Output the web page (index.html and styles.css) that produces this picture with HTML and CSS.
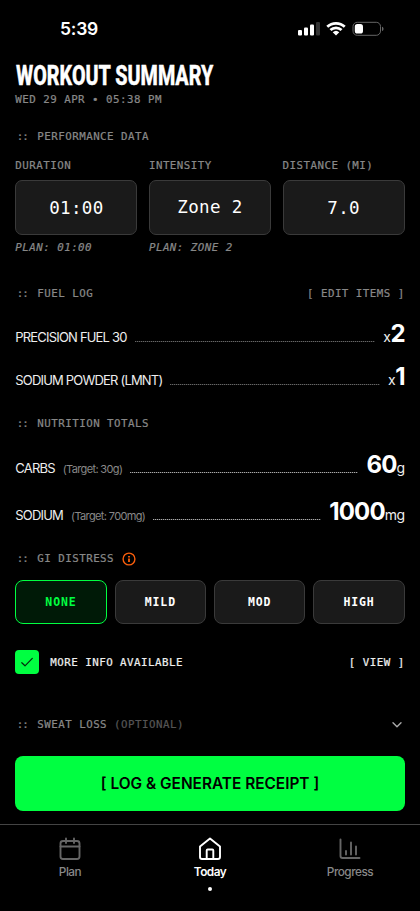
FILE: index.html
```html
<!DOCTYPE html>
<html lang="en">
<head>
<meta charset="utf-8">
<title>Workout Summary</title>
<link rel="stylesheet" href="styles.css">
</head>
<body>
<div class="status">
  <span class="time">5:39</span>
  <svg class="status-icons" width="86" height="16" viewBox="0 0 86 16" fill="#fff">
    <rect x="0" y="9" width="4" height="5.5" rx="1.1"/><rect x="6" y="6.5" width="4" height="8" rx="1.1"/><rect x="12" y="3.5" width="4" height="11" rx="1.1"/><rect x="18" y="1" width="4" height="13.500" rx="1.100" fill="#333"/>
    <path d="M28.300 4.800a14 14 0 0 1 19.400 0l-1.900 2a11.300 11.300 0 0 0-15.600 0zM31.500 8.100a9.400 9.400 0 0 1 13 0l-1.900 2a6.600 6.600 0 0 0-9.200 0zM34.700 11.300a4.800 4.800 0 0 1 6.600 0L38 14.600z"/>
    <rect x="55" y="1.300" width="27.500" height="13" rx="4.200" fill="none" stroke="#666"/>
    <path d="M84 5.700c2 .5 2 3.700 0 4.200z" fill="#666"/>
    <rect x="56.800" y="3.100" width="8.200" height="9.500" rx="2.600"/>
  </svg>
</div>
<main>
  <h1><span>WORKOUT SUMMARY</span></h1>
  <p class="date mono">WED 29 APR • 05:38 PM</p>

  <h2 class="section mono performance"><i class="mark">::</i>PERFORMANCE DATA</h2>
  <div class="metrics">
    <div class="metric mono"><label>DURATION</label><div class="value">01:00</div><em>PLAN: 01:00</em></div>
    <div class="metric mono"><label>INTENSITY</label><div class="value zone">Zone 2</div><em>PLAN: ZONE 2</em></div>
    <div class="metric mono"><label>DISTANCE (MI)</label><div class="value">7.0</div></div>
  </div>

  <h2 class="section mono fuel"><i class="mark">::</i>FUEL LOG<span class="action">[ EDIT ITEMS ]</span></h2>
  <div class="items">
    <div class="item"><span class="name">PRECISION FUEL 30</span><i class="dots"></i><span class="amount">x<b>2</b></span></div>
    <div class="item"><span class="name">SODIUM POWDER (LMNT)</span><i class="dots"></i><span class="amount">x<b>1</b></span></div>
  </div>

  <h2 class="section mono nutrition"><i class="mark">::</i>NUTRITION TOTALS</h2>
  <div class="items totals">
    <div class="item"><span class="name">CARBS</span><small>(Target: 30g)</small><i class="dots"></i><span class="amount"><b>60</b>g</span></div>
    <div class="item"><span class="name">SODIUM</span><small>(Target: 700mg)</small><i class="dots"></i><span class="amount"><b>1000</b>mg</span></div>
  </div>

  <h2 class="section mono distress"><i class="mark">::</i>GI DISTRESS
    <svg class="info" width="14" height="14" viewBox="0 0 14 14" fill="none" stroke="#f95e0c" stroke-width="1.400"><circle cx="7" cy="7" r="5.900"/><path d="M7 6.600v3.300M7 4v1.400" stroke-width="1.800"/></svg>
  </h2>
  <div class="levels">
    <button class="selected">NONE</button><button>MILD</button><button>MOD</button><button>HIGH</button>
  </div>

  <div class="more mono">
    <span class="check"><svg width="14" height="14" viewBox="0 0 14 14" fill="none" stroke="#022c0c" stroke-width="1.200" stroke-linecap="round" stroke-linejoin="round"><path d="M1.800 7.700 5 10.800 12.300 3.400"/></svg></span>
    <span>MORE INFO AVAILABLE</span><span class="action">[ VIEW ]</span>
  </div>

  <h2 class="section mono sweat"><i class="mark">::</i>SWEAT LOSS&nbsp;<span class="optional">(OPTIONAL)</span>
    <svg class="chevron" width="12" height="8" viewBox="0 0 12 8" fill="none" stroke="#aaa" stroke-width="1.400" stroke-linecap="round" stroke-linejoin="round"><path d="M2 1.800l4 4 4-4"/></svg>
  </h2>
  <button class="submit">[ LOG &amp; GENERATE RECEIPT ]</button>
</main>
<nav>
  <a><svg viewBox="0 0 24 24"><rect x="2.500" y="4" width="19" height="18" rx="2.500"/><path d="M2.500 9.500h19M8 1.500V6M16 1.500V6"/></svg>Plan</a>
  <a class="current"><svg viewBox="0 0 24 24"><path d="M2 9.500 12 1.500l10 8V20a2 2 0 0 1-2 2H4a2 2 0 0 1-2-2zM8.700 22V13.500a1 1 0 0 1 1-1h4.600a1 1 0 0 1 1 1V22"/></svg>Today<i></i></a>
  <a><svg viewBox="0 0 24 24"><path d="M2.500 2.500V19a2 2 0 0 0 2 2h17M8 14v3.500M13 5.500v12M18 9.500v8"/></svg>Progress</a>
</nav>
</body>
</html>
```
FILE: styles.css
```css
* { box-sizing: border-box; }
body {
  margin: 0;
  width: 420px;
  height: 911px;
  overflow: hidden;
  background: #000;
  color: #fff;
  font-family: Inter, "Liberation Sans", sans-serif;
}
h1, h2, p { margin: 0; }
.status {
  height: 60px;
  padding: 3px 36px 0 60px;
  display: flex;
  align-items: center;
  justify-content: space-between;
  font-size: 17.500px;
  font-weight: 600;
  letter-spacing: -0.200px;
}
.status .time { position: relative; top: -3px; }
.status-icons { position: relative; top: -3px; }
main { padding: 0 15.300px; }
h1 {
  height: 32px;
  padding: 1px 0 0 0.700px;
  font: 800 27px/31px Roboto, sans-serif;
  white-space: nowrap;
}
h1 span {
  display: inline-block;
  transform: scaleX(0.731);
  transform-origin: left;
  -webkit-text-stroke: 0.400px currentColor;
}
.mono {
  font-family: "DejaVu Sans Mono", monospace;
  font-size: 10.800px;
  letter-spacing: 0.480px;
  white-space: nowrap;
  -webkit-text-stroke: 0.220px currentColor;
}
.date { height: 16px; line-height: 16px; color: #888; }
.section {
  display: flex;
  align-items: center;
  height: 16px;
  line-height: 16px;
  font-weight: 400;
  color: #888;
}
.mark { width: 22px; padding-left: 1.500px; letter-spacing: -1px; font-style: normal; }
.action { margin-left: auto; }
.performance { margin-top: 21px; }
.metrics { display: grid; grid-template-columns: repeat(3, 1fr); gap: 11.500px; margin-top: 13px; }
.metric { display: flex; flex-direction: column; color: #888; line-height: 16px; }
.value {
  height: 55px;
  margin: 6px 0 5px;
  border: 1px solid #3a3a3a;
  border-radius: 7px;
  background: #1a1a1a;
  color: #fff;
  font-size: 17.500px;
  line-height: 54px;
  letter-spacing: 0.350px;
  text-align: center;
  -webkit-text-stroke: 0;
}
.zone { line-height: 53px; }
.fuel { margin-top: 30px; }
.items { padding-top: 17px; }
.item { display: flex; align-items: baseline; height: 43px; line-height: 30px; }
.name { font-size: 13px; letter-spacing: -0.810px; color: #eee; }
.dots {
  flex: 1;
  height: 1px;
  margin: 0 8px;
  background: repeating-linear-gradient(90deg, #666 0 1px, #222 1px 2px);
}
.amount { font-size: 14px; letter-spacing: -0.500px; color: #eee; }
.amount b { font-size: 24px; letter-spacing: -0.800px; color: #fff; }
.nutrition { margin-top: 11px; }
.totals { padding-top: 18px; }
.totals .item { height: 47px; }
.totals .dots { background: repeating-linear-gradient(90deg, #aaa 0 1px, #333 1px 2px); }
.item small { margin-left: 8px; font-size: 11px; letter-spacing: -0.640px; color: #888; }
.distress { margin-top: 7px; }
.info { margin-left: 8px; }
.levels { display: grid; grid-template-columns: repeat(4, 1fr); gap: 8px; margin-top: 13.300px; }
.levels button {
  height: 43.500px;
  border: 1px solid #3a3a3a;
  border-radius: 8px;
  background: #1a1a1a;
  color: #fff;
  font: 700 11.500px "DejaVu Sans Mono", monospace;
  letter-spacing: 0.900px;
}
.levels .selected { border: 1.500px solid #00ff41; background: #001a07; color: #00ff41; }
.more { display: flex; align-items: center; height: 24px; margin-top: 26.500px; color: #eee; }
.check {
  display: flex;
  align-items: center;
  justify-content: center;
  width: 24px;
  height: 24px;
  margin-right: 11px;
  border-radius: 4px;
  background: #00ff41;
}
.sweat { margin-top: 43px; }
.optional { color: #555; }
.chevron { margin-left: auto; margin-right: 2px; }
.submit {
  display: block;
  width: 100%;
  height: 55.500px;
  margin-top: 22.500px;
  border: 0;
  border-radius: 8px;
  background: #00ff41;
  color: #000;
  font: 600 15.400px Inter, sans-serif;
}
nav {
  display: grid;
  grid-template-columns: repeat(3, 1fr);
  height: 87px;
  margin-top: 12.500px;
  border-top: 1px solid #444;
}
nav a {
  display: flex;
  flex-direction: column;
  align-items: center;
  padding-top: 12px;
  color: #888;
  font-size: 11.800px;
  font-weight: 500;
  line-height: 16px;
  letter-spacing: -0.500px;
}
nav svg {
  width: 24px;
  height: 24px;
  margin-bottom: 3px;
  fill: none;
  stroke: #666;
  stroke-width: 1.900;
  stroke-linecap: round;
  stroke-linejoin: round;
}
nav .current { color: #fff; font-weight: 600; }
nav .current svg { stroke: #fff; }
nav .current i { width: 4px; height: 4px; margin-top: 7px; border-radius: 50%; background: #fff; }
```
